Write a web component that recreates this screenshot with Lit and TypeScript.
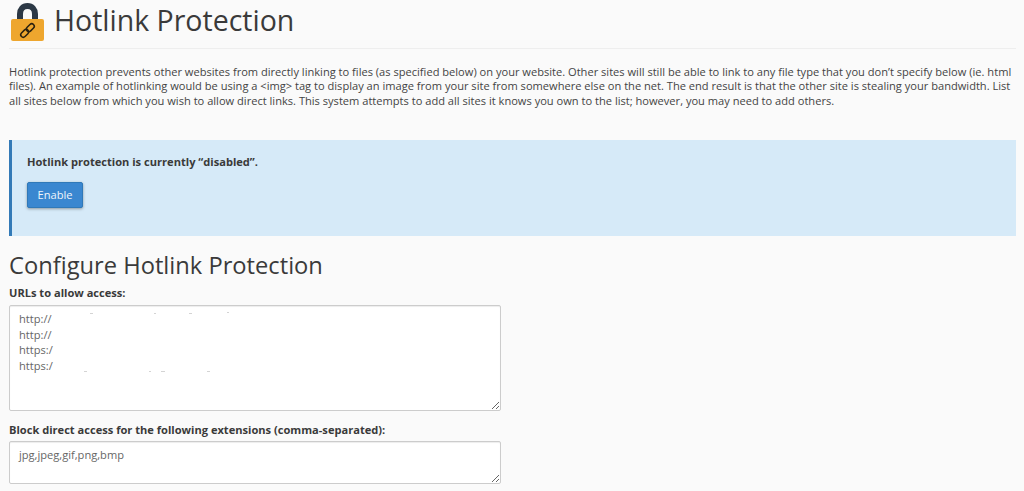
import { LitElement, html, svg, css } from "lit";
import { customElement } from "lit/decorators.js";

const SPECKS: [number, number, number][] = [
  [39, 8, 3], [103, 8, 2], [138, 8, 3], [176, 7, 2],
  [33, 66, 3], [98, 66, 2], [110, 66, 4], [156, 66, 3],
];

@customElement("app-root")
export class AppRoot extends LitElement {
  static styles = css`
    :host { display: block; height: 491px; overflow: hidden; background: #fafafa; color: #444; font-family: "Open Sans", sans-serif; font-size: 11.1px; line-height: 14.3px; }
    .page { padding: 0 8px 0 9px; display: flex; flex-direction: column; }
    .head { display: flex; align-items: flex-start; gap: 10px; padding: 2px 0 0 2px; height: 49px; box-sizing: border-box; border-bottom: 1px solid #eee; }
    .head svg { flex: none; }
    h1 { margin: 0; font-weight: 400; font-size: 28.5px; line-height: 36px; color: #3a3a3a; }
    p { margin: 16px 0 0; }
    .alert { margin-top: 32px; height: 96px; box-sizing: border-box; border-left: 3px solid #337ab7; background: #d6eaf8; padding: 15px 15px; }
    .alert strong { display: block; font-weight: 700; color: #3a3a3a; }
    button { display: block; margin-top: 13px; width: 56px; height: 26px; padding: 0 0 2px; border: 1px solid #3079b8; border-radius: 2px; background: #3a87d0; color: #eef5fb; font: 400 11.1px "Open Sans", sans-serif; box-shadow: 0 1px 3px rgba(0,0,0,.35); }
    h2 { margin: 14px 0 0; font-weight: 400; font-size: 23.7px; line-height: 30px; color: #3a3a3a; }
    label { display: block; font-weight: 700; margin-top: 5px; line-height: 16px; color: #3a3a3a; }
    textarea { display: block; box-sizing: border-box; width: 492px; margin: 4px 0 0; padding: 5px 9px; border: 1px solid #ccc; border-radius: 2px; background: #fff; color: #666; font: 400 11.1px/15.8px "Open Sans", sans-serif; box-shadow: inset 0 1px 1px rgba(0,0,0,.075); outline: none; }
    .urls { height: 106px; }
    .ext { height: 43px; margin-top: 3px; }
    .second { margin-top: 11px; }
    .field { position: relative; }
    .specks { position: absolute; left: 42px; top: 4px; width: 180px; height: 76px; pointer-events: none; }
  `;
  render() {
    return html`<div class="page">
      <div class="head">
        <svg width="33" height="39" viewBox="0 0 33 39" aria-hidden="true">
          <path d="M9 18V12C9 7.500 12 4 16.500 4S24 7.500 24 12V18" fill="none" stroke="#2c3845" stroke-width="6"/>
          <rect x="0" y="17" width="33" height="22" rx="2" fill="#eea62e"/>
          <g fill="none" stroke="#2a2110" stroke-width="1.500" transform="rotate(-45 16.500 28.500)">
            <rect x="8" y="26" width="9" height="5" rx="2.500"/>
            <rect x="16" y="26" width="9" height="5" rx="2.500"/>
          </g>
        </svg>
        <h1>Hotlink Protection</h1>
      </div>
      <p>Hotlink protection prevents other websites from directly linking to files (as specified below) on your website. Other sites will still be able to link to any file type that you don’t specify below (ie. html files). An example of hotlinking would be using a &lt;img&gt; tag to display an image from your site from somewhere else on the net. The end result is that the other site is stealing your bandwidth. List all sites below from which you wish to allow direct links. This system attempts to add all sites it knows you own to the list; however, you may need to add others.</p>
      <div class="alert">
        <strong>Hotlink protection is currently “disabled”.</strong>
        <button>Enable</button>
      </div>
      <h2>Configure Hotlink Protection</h2>
      <label>URLs to allow access:</label>
      <div class="field">
        <textarea class="urls">http://
http://
https:/
https:/</textarea>
        <svg class="specks" viewBox="0 0 180 76" aria-hidden="true">
          ${SPECKS.map(([x, y, w]) => svg`<rect x=${x} y=${y} width=${w} height="1" fill="#d4d4d4"/>`)}
        </svg>
      </div>
      <label class="second">Block direct access for the following extensions (comma-separated):</label>
      <textarea class="ext">jpg,jpeg,gif,png,bmp</textarea>
    </div>`;
  }
}
